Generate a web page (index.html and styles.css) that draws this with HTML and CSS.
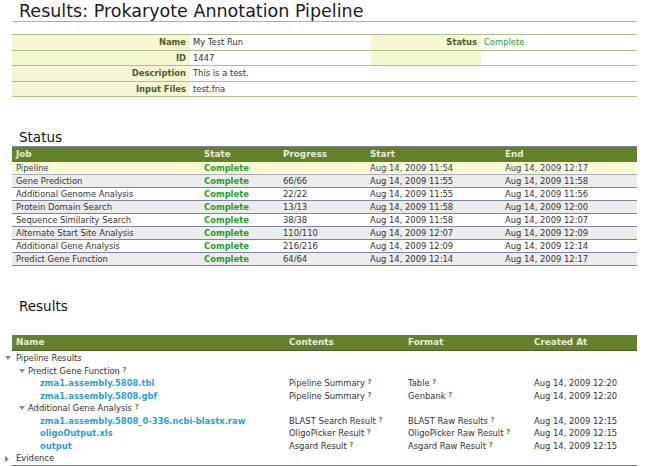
FILE: index.html
```html
<!DOCTYPE html>
<html>
<head>
<meta charset="utf-8">
<link rel="stylesheet" href="styles.css">
</head>
<body>
<h1 class="title">Results: Prokaryote Annotation Pipeline</h1>

<table class="info">
  <colgroup><col class="c1"><col class="c2"><col class="c3"><col class="c4"></colgroup>
  <tr><th>Name</th><td>My Test Run</td><th>Status</th><td class="complete">Complete</td></tr>
  <tr><th>ID</th><td>1447</td><th></th><td></td></tr>
  <tr><th>Description</th><td colspan="3">This is a test.</td></tr>
  <tr><th>Input Files</th><td colspan="3">test.fna</td></tr>
</table>

<h2 class="section">Status</h2>
<table class="grid status">
  <colgroup><col class="s1"><col class="s2"><col class="s3"><col class="s4"><col class="s5"></colgroup>
  <thead><tr><th>Job</th><th>State</th><th>Progress</th><th>Start</th><th>End</th></tr></thead>
  <tbody>
    <tr class="main"><td>Pipeline</td><td class="complete">Complete</td><td></td><td>Aug 14, 2009 11:54</td><td>Aug 14, 2009 12:17</td></tr>
    <tr class="odd"><td>Gene Prediction</td><td class="complete">Complete</td><td>66/66</td><td>Aug 14, 2009 11:55</td><td>Aug 14, 2009 11:58</td></tr>
    <tr><td>Additional Genome Analysis</td><td class="complete">Complete</td><td>22/22</td><td>Aug 14, 2009 11:55</td><td>Aug 14, 2009 11:56</td></tr>
    <tr class="odd"><td>Protein Domain Search</td><td class="complete">Complete</td><td>13/13</td><td>Aug 14, 2009 11:58</td><td>Aug 14, 2009 12:00</td></tr>
    <tr><td>Sequence Similarity Search</td><td class="complete">Complete</td><td>38/38</td><td>Aug 14, 2009 11:58</td><td>Aug 14, 2009 12:07</td></tr>
    <tr class="odd"><td>Alternate Start Site Analysis</td><td class="complete">Complete</td><td>110/110</td><td>Aug 14, 2009 12:07</td><td>Aug 14, 2009 12:09</td></tr>
    <tr><td>Additional Gene Analysis</td><td class="complete">Complete</td><td>216/216</td><td>Aug 14, 2009 12:09</td><td>Aug 14, 2009 12:14</td></tr>
    <tr class="odd"><td>Predict Gene Function</td><td class="complete">Complete</td><td>64/64</td><td>Aug 14, 2009 12:14</td><td>Aug 14, 2009 12:17</td></tr>
  </tbody>
</table>

<h2 class="section">Results</h2>
<table class="grid results">
  <colgroup><col class="r0"><col class="r1"><col class="r2"><col class="r3"><col class="r4"></colgroup>
  <thead><tr><th class="sp"></th><th>Name</th><th>Contents</th><th>Format</th><th>Created At</th></tr></thead>
  <tbody>
    <tr><td class="sp"><span class="tri down"></span></td><td class="lv1">Pipeline Results</td><td></td><td></td><td></td></tr>
    <tr><td class="sp"></td><td class="lv2"><span class="tri down in"></span>Predict Gene Function <sup class="help">?</sup></td><td></td><td></td><td></td></tr>
    <tr><td class="sp"></td><td class="lv3"><a class="file">zma1.assembly.5808.tbl</a></td><td>Pipeline Summary <sup class="help">?</sup></td><td>Table <sup class="help">?</sup></td><td>Aug 14, 2009 12:20</td></tr>
    <tr><td class="sp"></td><td class="lv3"><a class="file">zma1.assembly.5808.gbf</a></td><td>Pipeline Summary <sup class="help">?</sup></td><td>Genbank <sup class="help">?</sup></td><td>Aug 14, 2009 12:20</td></tr>
    <tr><td class="sp"></td><td class="lv2"><span class="tri down in"></span>Additional Gene Analysis <sup class="help">?</sup></td><td></td><td></td><td></td></tr>
    <tr><td class="sp"></td><td class="lv3"><a class="file">zma1.assembly.5808_0-336.ncbi-blastx.raw</a></td><td>BLAST Search Result <sup class="help">?</sup></td><td>BLAST Raw Results <sup class="help">?</sup></td><td>Aug 14, 2009 12:15</td></tr>
    <tr><td class="sp"></td><td class="lv3"><a class="file">oligoOutput.xls</a></td><td>OligoPicker Result <sup class="help">?</sup></td><td>OligoPicker Raw Result <sup class="help">?</sup></td><td>Aug 14, 2009 12:15</td></tr>
    <tr><td class="sp"></td><td class="lv3"><a class="file">output</a></td><td>Asgard Result <sup class="help">?</sup></td><td>Asgard Raw Result <sup class="help">?</sup></td><td>Aug 14, 2009 12:15</td></tr>
    <tr class="last"><td class="sp"><span class="tri right"></span></td><td class="lv1">Evidence</td><td></td><td></td><td></td></tr>
  </tbody>
</table>
</body>
</html>
```

FILE: styles.css
```css
html, body {
  background: #ffffff;
}
body {
  margin: 0 11px 0 4px;
  font-family: "DejaVu Sans", Verdana, sans-serif;
  font-size: 8.4px;
  color: #333333;
}
.title {
  margin: 2px 0 0 8px;
  padding-left: 7px;
  font-size: 17.5px;
  font-weight: normal;
  line-height: 19px;
  color: #1a1a1a;
  border-bottom: 1px solid #a4bc84;
}
table {
  border-collapse: collapse;
  width: calc(100% - 8px);
  margin-left: 8px;
  table-layout: fixed;
}
.info {
  margin-top: 12px;
  border-top: 1px solid #a9c18b;
}
.info col.c1 { width: 178px; }
.info col.c2 { width: 181px; }
.info col.c3 { width: 110px; }
.info th, .info td {
  border-bottom: 1px solid #a9c18b;
  padding: 2px 4px 2px 3px;
  line-height: 10.6px;
  height: 10.6px;
  text-align: left;
  font-weight: normal;
}
.info th {
  background: #f6f6d3;
  color: #4d5d2d;
  font-weight: bold;
  text-align: right;
}
.complete {
  color: #2a9a2a;
  font-weight: bold;
}
.section {
  margin: 32px 0 0 8px;
  padding-left: 7px;
  font-size: 13.5px;
  font-weight: normal;
  line-height: 16px;
  color: #111111;
}
.grid thead th {
  background: #63812b;
  color: #e6edd9;
  font-weight: bold;
  font-size: 8.8px;
  text-align: left;
  padding: 0 4px;
  height: 15px;
  line-height: 15px;
}
.status {
  margin-top: 1px;
  border-top: 1px solid #7b84a3;
}
.status col.s1 { width: 188px; }
.status col.s2 { width: 79px; }
.status col.s3 { width: 87px; }
.status col.s4 { width: 135px; }
.status tbody td {
  padding: 0 4px;
  line-height: 12px;
  height: 12px;
  border-bottom: 1px solid #7b84a3;
  white-space: nowrap;
}
.status tr.main td {
  background: #fafad4;
  color: #2d3f6e;
  border-bottom-color: #a8aebf;
}
.status tr.main td.complete {
  color: #2a9a2a;
}
.status tr.odd td {
  background: #ececec;
}
.results {
  margin: 21px 0 0 0;
  width: 100%;
}
.results col.r0 { width: 8px; }
.results col.r1 { width: 273px; }
.results col.r2 { width: 119px; }
.results col.r3 { width: 126px; }
.results thead th {
  border-bottom: 1px solid #4f5f2a;
}
.results thead th.sp {
  background: transparent;
  border-bottom: none;
  padding: 0;
}
.results tbody td {
  padding: 0 4px;
  line-height: 12.5px;
  height: 12.5px;
  white-space: nowrap;
}
.results tbody td.sp {
  padding: 0 0 0 1px;
}
.results tbody tr:first-child td {
  padding-top: 1px;
}
.results tr.last td {
  border-bottom: 1px solid #6b7aa0;
}
.results tr.last td.sp {
  border-bottom: none;
}
.results td.lv1 { padding-left: 4px; }
.results td.lv2 { padding-left: 16px; }
.results td.lv3 { padding-left: 28px; }
.tri {
  display: inline-block;
  width: 0;
  height: 0;
  vertical-align: 1px;
}
.tri.down {
  border-left: 3px solid transparent;
  border-right: 3px solid transparent;
  border-top: 4px solid #8a8a8a;
}
.tri.right {
  vertical-align: 0;
  border-top: 3px solid transparent;
  border-bottom: 3px solid transparent;
  border-left: 4px solid #8a8a8a;
}
.tri.in {
  margin: 0 3px 0 -9px;
}
.file {
  color: #2e9fce;
  font-weight: bold;
  text-decoration: none;
}
.help {
  font-size: 7px;
  font-weight: bold;
  color: #5a8a2a;
  vertical-align: 2px;
  line-height: 0;
}
```
